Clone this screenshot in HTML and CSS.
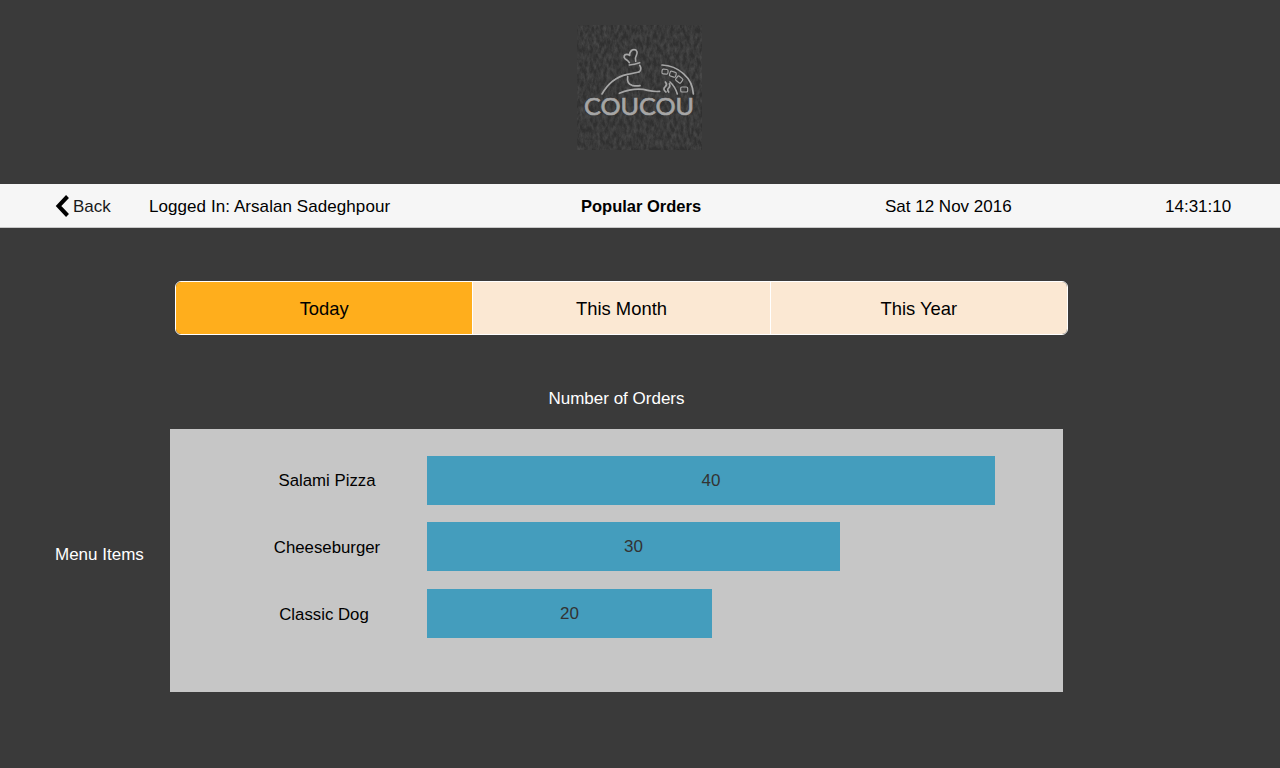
FILE: index.html
```html
<!DOCTYPE html>
<html lang="en">
<head>
  <meta charset="UTF-8">
  <title>Popular Orders</title>
  <meta name="viewport" content="width=device-width, initial-scale=1.0">
  <link rel="stylesheet" href="styles.css">
</head>
<body>
  <div class="logo-wrap">
    <svg class="logo" viewBox="21 15 375 375" aria-label="Coucou logo">
      <defs>
        <filter id="grain" x="0" y="0" width="100%" height="100%">
          <feTurbulence type="fractalNoise" baseFrequency="0.1 0.05" numOctaves="4" seed="7"/>
          <feColorMatrix values="0 0 0 0 0.27  0 0 0 0 0.27  0 0 0 0 0.27  0.5 0 0 0 -0.15"/>
        </filter>
      </defs>
      <rect x="21" y="15" width="375" height="375" fill="#303030"/>
      <rect x="21" y="15" width="375" height="375" filter="url(#grain)"/>
      <g class="logo-lines">
        <path d="M178 128c-3-6-8-9-13-12-5-5-3-13 5-13 4 0 7 1 9 3-1-9 5-17 13-17 9 0 12 9 7 17-3 5-5 9-2 18"/>
        <path d="M178 135c9-1 19-3 31-7M209 136c5 7 5 16-2 20"/>
        <path d="M96 222c18-32 42-52 76-59 12-2 24-4 34-7"/>
        <path d="M173 170c-2 12 1 22 13 26 8 2 16 2 24 1"/>
        <path d="M148 220c30-12 62-15 85-9 12 3 25 4 36 3"/>
        <path d="M276 135c48 2 92 38 94 87"/>
        <path d="M300 186c10 9 18 22 22 36"/>
        <path d="M288 216c-8-6-8-11-2-16 5-5 4-10 0-14M296 216c-4-5-4-9 1-13 4-4 3-8 1-12"/>
        <rect class="tile" x="276" y="148" width="18" height="14" rx="4" transform="rotate(6 285 155)"/>
        <rect class="tile" x="299" y="155" width="19" height="15" rx="4" transform="rotate(18 308 163)"/>
        <rect class="tile" x="318" y="171" width="19" height="16" rx="4" transform="rotate(38 328 179)"/>
        <rect class="tile" x="332" y="201" width="21" height="15" rx="4"/>
      </g>
      <text class="logo-text" x="42" y="284" textLength="330" lengthAdjust="spacingAndGlyphs">COUCOU</text>
    </svg>
  </div>

  <div class="topbar">
    <a class="back" href="#">
      <svg class="back-icon" viewBox="0 0 16 24"><path d="M12.500 2.500 3.500 12l9 9.500"/></svg>
      <span>Back</span>
    </a>
    <span class="user">Logged In: Arsalan Sadeghpour</span>
    <strong class="title">Popular Orders</strong>
    <span class="date">Sat 12 Nov 2016</span>
    <span class="time">14:31:10</span>
  </div>

  <div class="main">
    <div class="tabs">
      <button class="tab active">Today</button>
      <button class="tab">This Month</button>
      <button class="tab">This Year</button>
    </div>

    <div class="chart-title">Number of Orders</div>

    <div class="chart-row">
      <div class="axis-label">Menu Items</div>
      <div class="chart">
        <div class="chart-item">
          <div class="item-name">Salami Pizza</div>
          <div class="item-bar" style="width: 568px">40</div>
        </div>
        <div class="chart-item">
          <div class="item-name">Cheeseburger</div>
          <div class="item-bar" style="width: 413px">30</div>
        </div>
        <div class="chart-item">
          <div class="item-name item-name-short">Classic Dog</div>
          <div class="item-bar" style="width: 285px">20</div>
        </div>
      </div>
    </div>
  </div>
</body>
</html>
```

FILE: styles.css
```css
* { box-sizing: border-box; }
body { margin: 0; height: 768px; overflow: hidden; background: #3a3a3a; color: #fff; font-family: "Liberation Sans", Arial, sans-serif; font-size: 17px; }

.logo-wrap { display: flex; justify-content: center; padding: 25px 1px 34px 0; }
.logo { display: block; width: 125px; height: 125px; }
.logo-lines { fill: none; stroke: #a6a6a6; stroke-width: 5; stroke-linecap: round; stroke-linejoin: round; }
.logo-lines .tile { stroke-width: 3.500; }
.logo-text { font-family: Lato, sans-serif; font-size: 72px; font-weight: 400; fill: #a6a6a6; stroke: #a6a6a6; stroke-width: 2; }

.topbar { display: flex; align-items: center; height: 44px; padding: 2px 0 0 55px; line-height: 20px; background: #f6f6f6; border-bottom: 1px solid #c8c8c8; color: #000; }
.back { display: flex; align-items: center; width: 94px; color: #1a1a1a; text-decoration: none; font-size: 17px; }
.back-icon { width: 16px; height: 24px; margin: -2px 2px 0 0; fill: none; stroke: #000; stroke-width: 4; }
.user { width: 432px; letter-spacing: 0.07px; }
.title { width: 304px; margin-top: -2px; font-size: 16.500px; font-weight: bold; }
.date { width: 280px; }

.main { padding: 53px 0 0 170px; }
.tabs { display: flex; width: 893px; height: 54px; margin-left: 5px; border: 1px solid #fff; border-radius: 6px; overflow: hidden; }
.tab { flex: 1; padding: 2px 0 0 0; border: none; border-left: 1px solid #fff; background: #fbe8d3; color: #000; font-family: inherit; font-size: 18.400px; }
.tab:first-child { border-left: none; }
.tab.active { background: #ffae1c; }

.chart-title { width: 893px; margin-top: 54px; margin-bottom: -1px; line-height: 20px; text-align: center; }

.chart-row { position: relative; width: 893px; margin-top: 21px; }
.axis-label { position: absolute; left: -115px; top: 116px; line-height: 20px; }
.chart { display: flex; flex-direction: column; gap: 17.400px; height: 263px; padding: 27px 0 0 0; background: #c6c6c6; }
.chart-item { display: flex; align-items: center; color: #000; }
.chart-item + .chart-item .item-name { padding-top: 2px; }
.item-name { width: 257px; padding-left: 57px; font-size: 16.800px; text-align: center; }
.chart-item + .chart-item .item-name-short { padding: 3px 6px 0 57px; }
.item-bar { height: 49px; line-height: 49px; background: #449dbd; color: #333; text-align: center; }
```
